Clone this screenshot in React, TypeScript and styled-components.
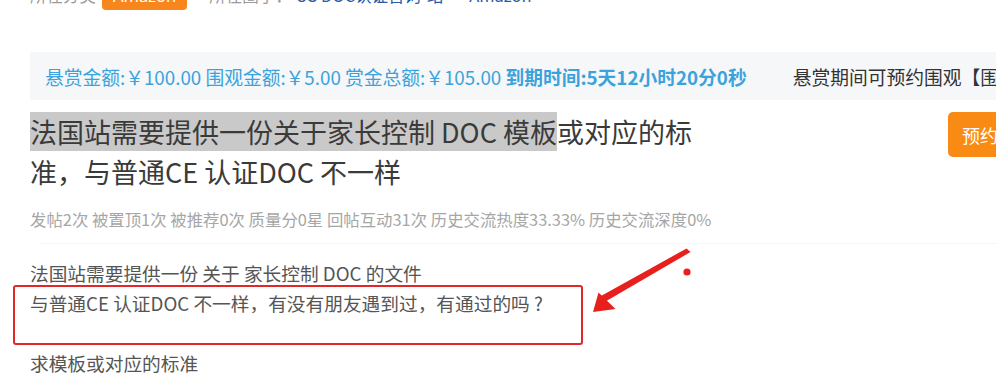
import React from "react";
import styled, { createGlobalStyle } from "styled-components";

const Global = createGlobalStyle`
  html, body { margin: 0; padding: 0; background: #ffffff; }
  body { font-family: "Noto Sans CJK SC", "Noto Sans", sans-serif; }
`;

const Page = styled.div`
  position: relative;
  width: 996px;
  height: 388px;
  overflow: hidden;
  padding-left: 30px;
  box-sizing: border-box;
  background: #fff;
`;

const TopRow = styled.div`
  display: flex;
  align-items: center;
  height: 26px;
  margin-top: -18px;
  font-size: 16.5px;
  white-space: nowrap;
`;

const Label = styled.span<{ $gap?: number }>`
  color: #9a9a9a;
  margin-left: ${(p) => p.$gap ?? 0}px;
`;

const Badge = styled.span`
  display: inline-flex;
  align-items: center;
  height: 29px;
  padding: 0 11px;
  margin-left: 6px;
  margin-top: 1px;
  background: #f7861c;
  color: #fff;
  border-radius: 4px;
  font-family: "Noto Sans", sans-serif;
`;

const CircleLink = styled.span<{ $gap?: number }>`
  color: #2b5aa7;
  margin-left: ${(p) => p.$gap ?? 0}px;
`;

const InfoBar = styled.div`
  display: flex;
  align-items: center;
  gap: 46px;
  height: 48px;
  margin-top: 44px;
  padding-left: 15px;
  background: #f6f7f9;
  font-size: 18.75px;
  white-space: nowrap;
  overflow: hidden;
`;

const InfoText = styled.span`
  color: #3ba3dc;
`;

const InfoStrong = styled.span`
  font-weight: 600;
`;

const Notice = styled.span`
  color: #333;
`;

const TitleRow = styled.div`
  display: grid;
  grid-template-columns: 918px 120px;
  margin-top: 12px;
`;

const Title = styled.h1`
  margin: 0;
  max-width: 676px;
  font-size: 27px;
  line-height: 40px;
  font-weight: 400;
  color: #3a3a3a;
`;

const Selected = styled.span`
  background: #c9c9c9;
`;

const ReserveButton = styled.div`
  height: 45px;
  display: flex;
  align-items: center;
  padding-left: 14px;
  background: #f98a14;
  color: #fff;
  border-radius: 5px;
  font-size: 18px;
  white-space: nowrap;
`;

const Stats = styled.div`
  margin-top: 15px;
  line-height: 24px;
  font-size: 16.4px;
  color: #a6a6a6;
  white-space: nowrap;
`;

const Divider = styled.div`
  margin-top: 12px;
  height: 1px;
  background: #f5f5f5;
  margin-left: 10px;
`;

const Body = styled.div`
  margin-top: 14px;
  font-size: 18.7px;
  line-height: 30px;
  color: #555;
`;

const Para = styled.p`
  margin: 0;
  min-height: 30px;
  white-space: nowrap;
`;

const Annotation = styled.div`
  position: absolute;
  left: 13px;
  top: 285px;
  width: 570px;
  height: 60px;
  box-sizing: border-box;
  border: 2px solid #e3262a;
  border-radius: 3px;
`;

const ArrowLayer = styled.svg`
  position: absolute;
  left: 580px;
  top: 240px;
`;

export default function App() {
  return (
    <>
      <Global />
      <Page>
        <TopRow>
          <Label>所在分类</Label>
          <Badge>Amazon</Badge>
          <Label $gap={22}>所在圈子：</Label>
          <CircleLink $gap={4}>US DOC认证咨询-站</CircleLink>
          <CircleLink $gap={26}>Amazon</CircleLink>
        </TopRow>

        <InfoBar>
          <InfoText>
            悬赏金额:￥100.00 围观金额:￥5.00 赏金总额:￥105.00{" "}
            <InfoStrong>到期时间:5天12小时20分0秒</InfoStrong>
          </InfoText>
          <Notice>悬赏期间可预约围观【围观金额】</Notice>
        </InfoBar>

        <TitleRow>
          <div>
            <Title>
              <Selected>法国站需要提供一份关于家长控制 DOC 模板</Selected>
              或对应的标准，与普通CE 认证DOC 不一样
            </Title>
            <Stats>
              发帖2次 被置顶1次 被推荐0次 质量分0星 回帖互动31次 历史交流热度33.33% 历史交流深度0%
            </Stats>
          </div>
          <ReserveButton>预约围观</ReserveButton>
        </TitleRow>

        <Divider />

        <Body>
          <Para>法国站需要提供一份 关于 家长控制 DOC 的文件</Para>
          <Para>与普通CE 认证DOC 不一样，有没有朋友遇到过，有通过的吗 ?</Para>
          <Para />
          <Para>求模板或对应的标准</Para>
        </Body>

        <Annotation />
        <ArrowLayer width="120" height="90" viewBox="0 0 120 90">
          <path d="M106.5 8.5 L110.5 12 L25.5 61.5 L21 56 Z" fill="#e8201d" />
          <path d="M13 72 L18.5 52.5 L35.5 69 Z" fill="#e8201d" />
          <circle cx="107" cy="32" r="3.6" fill="#e8201d" />
        </ArrowLayer>
      </Page>
    </>
  );
}
